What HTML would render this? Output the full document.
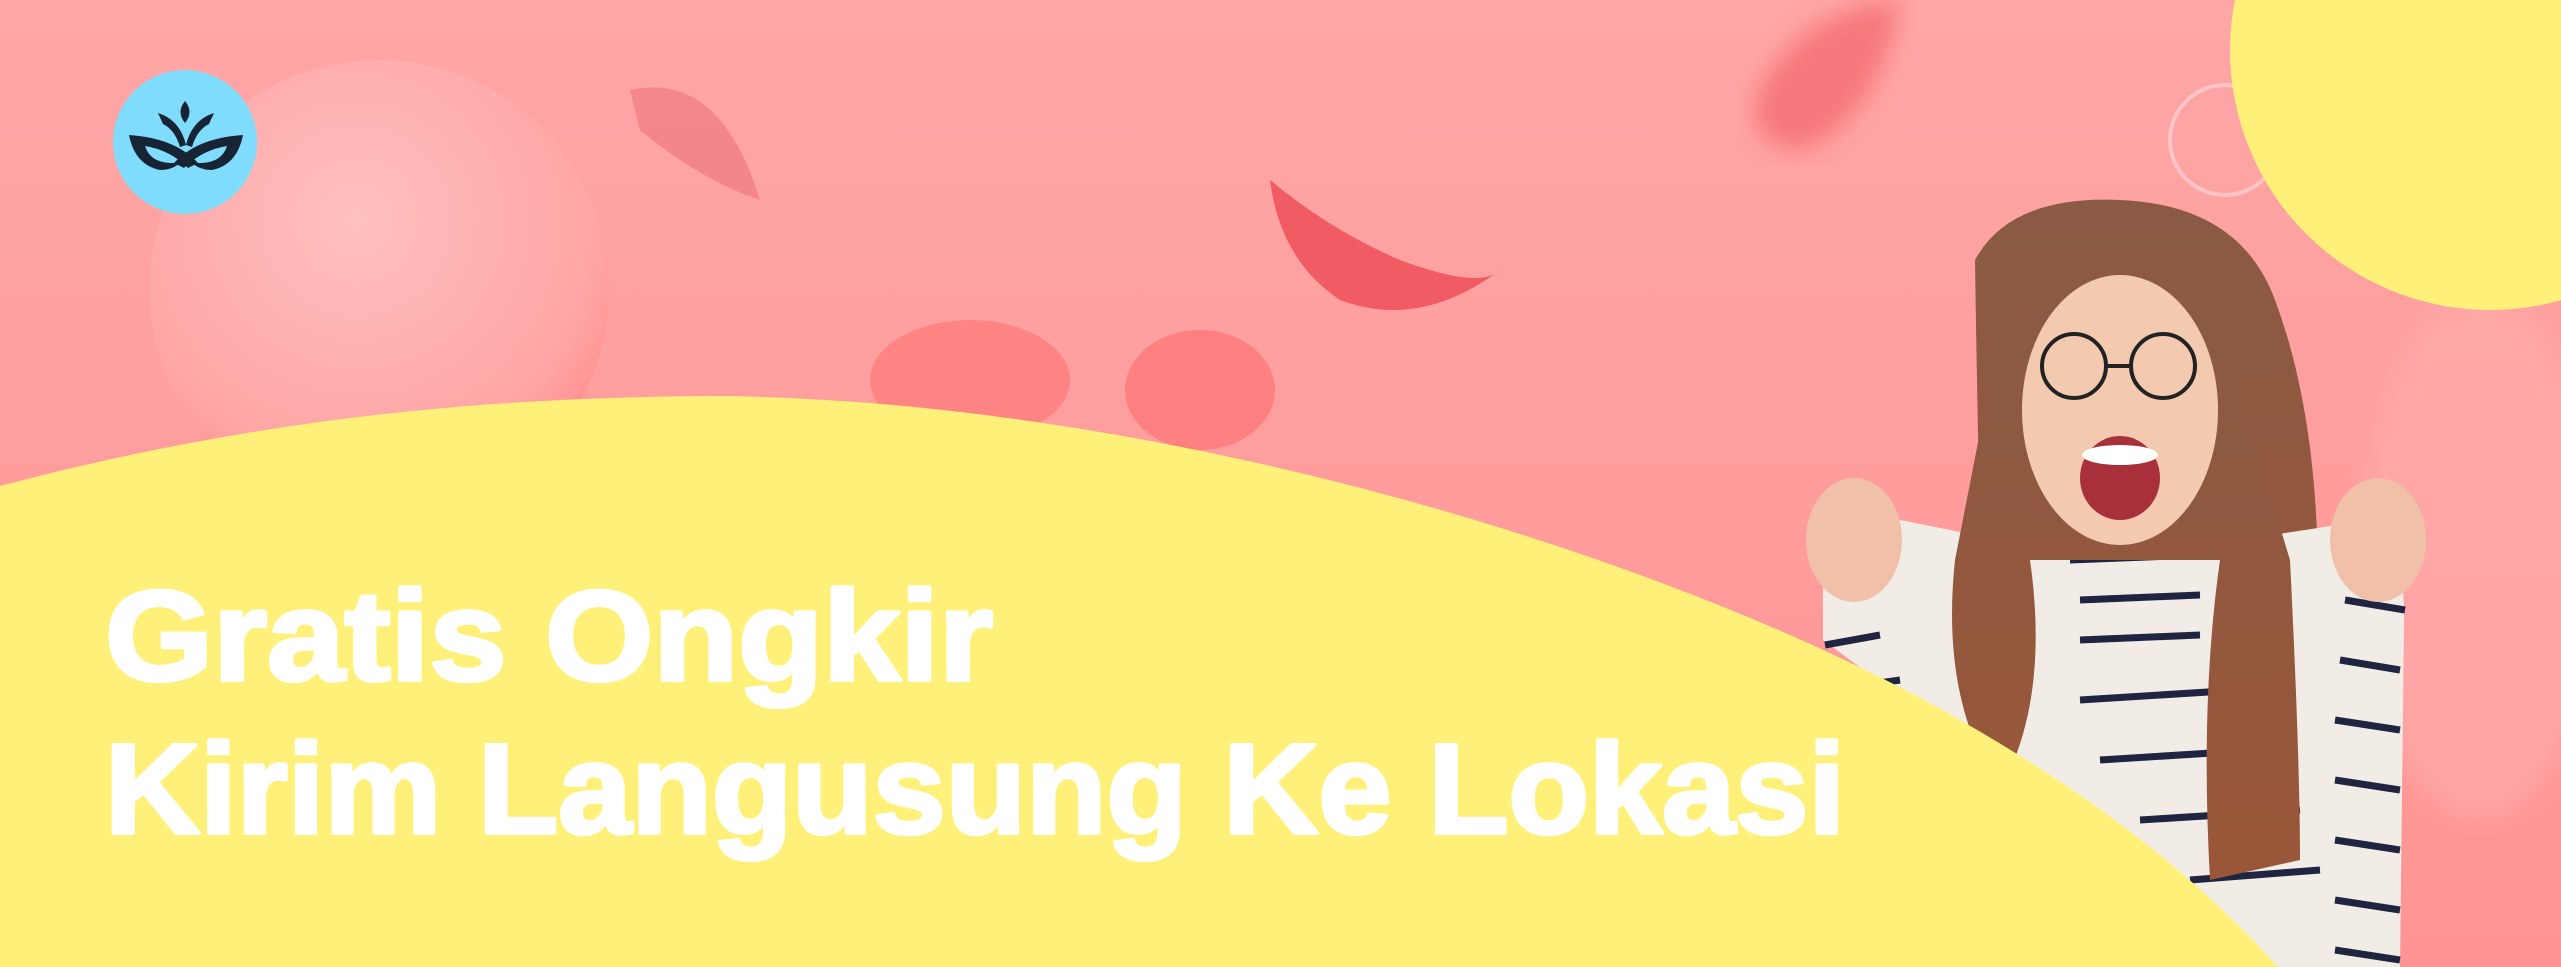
<!DOCTYPE html>
<html><head><meta charset="utf-8"><style>
html,body{margin:0;padding:0;width:2561px;height:967px;overflow:hidden;background:#ffa2a2}
svg{display:block}
</style></head><body>
<svg width="2561" height="967" viewBox="0 0 2561 967" xmlns="http://www.w3.org/2000/svg">
<defs>
<linearGradient id="bg" x1="0" y1="0" x2="0" y2="1">
<stop offset="0" stop-color="#ffa6a6"/><stop offset="1" stop-color="#ff9494"/>
</linearGradient>
<radialGradient id="sph" cx="0.45" cy="0.35" r="0.65">
<stop offset="0" stop-color="#ffc0c0"/><stop offset="0.8" stop-color="#ffa5a5"/><stop offset="1" stop-color="#ff9090"/>
</radialGradient>
<linearGradient id="hair" x1="0" y1="0" x2="0" y2="1">
<stop offset="0" stop-color="#8a5a44"/><stop offset="1" stop-color="#9a5638"/>
</linearGradient>
<filter id="blur"><feGaussianBlur stdDeviation="12"/></filter>
</defs>
<rect width="2561" height="967" fill="url(#bg)"/>
<circle cx="379" cy="290" r="230" fill="url(#sph)"/>
<ellipse cx="970" cy="380" rx="100" ry="60" fill="#ff8585"/>
<ellipse cx="1200" cy="390" rx="75" ry="60" fill="#ff8080"/>
<path d="M1270 180 Q1330 230 1400 260 Q1480 290 1500 270 Q1420 330 1340 300 Q1280 260 1270 180Z" fill="#ee4a55" opacity="0.8"/>
<path d="M1760 90 Q1800 10 1900 0 Q1880 120 1800 150 Q1740 140 1760 90Z" fill="#f05a60" opacity="0.6" filter="url(#blur)"/>
<path d="M630 90 Q720 70 760 200 Q700 180 640 130Z" fill="#e86a72" opacity="0.5"/>
<circle cx="2225" cy="140" r="55" fill="none" stroke="#ffc4c4" stroke-width="4"/>
<ellipse cx="2480" cy="560" rx="120" ry="260" fill="#ffb0b0" opacity="0.5" filter="url(#blur)"/>
<circle cx="2490" cy="50" r="260" fill="#fff07a"/>
<path d="M1975 260 Q2010 195 2120 200 Q2240 205 2275 300 Q2320 420 2318 600 L2330 820 L1990 820 Q1980 600 1975 260Z" fill="url(#hair)"/>
<path d="M1823 560 Q1823 520 1900 520 L2000 540 Q2120 560 2240 540 L2370 520 Q2405 540 2404 620 L2400 967 L2265 967 L1823 640Z" fill="#f1ede6"/>
<g stroke="#1f2440" stroke-width="7" fill="none">
<path d="M1825 645 L1880 635"/><path d="M1830 690 L1900 680"/><path d="M2345 600 L2405 610"/>
<path d="M2340 660 L2400 670"/><path d="M2335 720 L2400 730"/><path d="M2335 780 L2400 790"/>
<path d="M2335 840 L2400 850"/><path d="M2335 900 L2400 910"/><path d="M2335 950 L2400 960"/>
<path d="M2070 560 L2200 555"/><path d="M2080 600 L2200 595"/><path d="M2080 640 L2200 635"/>
<path d="M2080 700 L2240 690"/><path d="M2100 760 L2260 750"/><path d="M2140 820 L2300 810"/><path d="M2190 880 L2320 870"/>
</g>
<path d="M2000 330 Q2120 250 2220 330 L2290 560 Q2300 760 2300 860 L2210 880 Q2200 700 2220 560 L2030 560 Q2050 700 2000 790 Q1940 700 1955 560Z" fill="url(#hair)"/>
<ellipse cx="2120" cy="410" rx="98" ry="135" fill="#f3c9b0"/>
<ellipse cx="2120" cy="478" rx="40" ry="42" fill="#a8303a"/>
<ellipse cx="2120" cy="455" rx="38" ry="10" fill="#fff"/>
<circle cx="2074" cy="366" r="32" fill="none" stroke="#222" stroke-width="4"/>
<circle cx="2163" cy="366" r="32" fill="none" stroke="#222" stroke-width="4"/>
<path d="M2106 366 L2131 366" stroke="#222" stroke-width="4"/>
<ellipse cx="1854" cy="540" rx="48" ry="62" fill="#f0c0a8"/>
<ellipse cx="2378" cy="540" rx="48" ry="62" fill="#f0c0a8"/>
<path d="M0 486 C250 420 480 396 730 396 C1200 405 1700 570 1960 720 C2100 800 2200 880 2278 967 L0 967 Z" fill="#fff07a"/>
<circle cx="185" cy="142" r="72" fill="#80dcfd"/>
<g fill="#172435">
<path d="M129 135 Q175 138 198 163 L188 168 Q170 150 145 146 Q150 162 170 163 L180 163 Q172 170 160 170 Q135 165 129 135Z"/>
<path d="M243 135 Q197 138 174 163 L184 168 Q202 150 227 146 Q222 162 202 163 L192 163 Q200 170 212 170 Q237 165 243 135Z"/>
<path d="M158 113 Q180 120 186 145 L180 147 Q175 130 163 124Z"/>
<path d="M214 113 Q192 120 186 145 L192 147 Q197 130 209 124Z"/>
<path d="M185 101 Q194 112 185 123 Q176 112 185 101Z"/>
</g>
<g font-family="Liberation Sans, sans-serif" font-weight="bold" font-size="128" fill="#fff" stroke="#fff" stroke-width="4" stroke-linejoin="round">
<text x="105" y="680" textLength="888" lengthAdjust="spacingAndGlyphs">Gratis  Ongkir</text>
<text x="105" y="833" textLength="1740" lengthAdjust="spacingAndGlyphs">Kirim Langusung Ke Lokasi</text>
</g>
</svg>
</body></html>
